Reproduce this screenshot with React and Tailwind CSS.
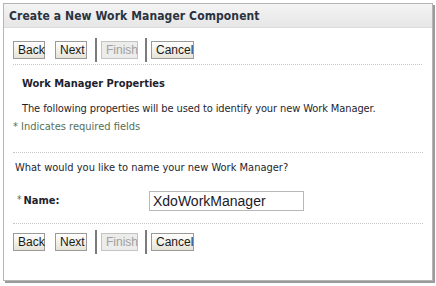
export default function App() {
  const btn = "h-[18px] px-[4px] border border-[#9a9a9a] bg-gradient-to-b from-[#ffffff] to-[#e6e3d6] text-[12px] leading-none text-[#1a1a1a] font-['Liberation_Sans',Arial,sans-serif]";
  const dis = "h-[18px] px-[4px] border border-[#c4c4c4] bg-[#ececea] text-[12px] leading-none text-[#a0a0a0] font-['Liberation_Sans',Arial,sans-serif]";

  const Buttons = () => (
    <div className="flex items-center h-[24px]">
      <button className={btn + " w-[32px]"}>Back</button>
      <button className={btn + " w-[32px] ml-[10px]"}>Next</button>
      <div className="w-[2px] h-[24px] bg-[#7b7b7b] ml-[8px]" />
      <button className={dis + " w-[37px] ml-[4px]"}>Finish</button>
      <div className="w-[2px] h-[24px] bg-[#7b7b7b] ml-[7px]" />
      <button className={btn + " w-[43px] ml-[4px]"}>Cancel</button>
    </div>
  );

  const rule = "border-t border-dotted border-[#c6c6c6]";

  return (
    <div className="w-[436px] h-[286px] bg-white p-[3px] font-['DejaVu_Sans_Condensed','Liberation_Sans',sans-serif] text-[#1f1f2e]">
      <div className="w-[430px] h-[278px] border border-[#b5b5b5] shadow-[2px_2px_0_#9a9a9a] flex flex-col">
        <div className="h-[24px] bg-gradient-to-b from-[#f4f4f4] to-[#e6e6e6] border-b border-[#dcdcdc] flex items-center pl-[5px]">
          <span className="text-[12px] font-bold text-[#2a3240] tracking-[0.1px]">Create a New Work Manager Component</span>
        </div>
        <div className="px-[9px] pt-[10px]">
          <Buttons />
          <div className={"mt-[2px] mr-[1px] " + rule} />
          <div className="pl-[9px] mt-[12px] text-[11px] leading-[14px] font-bold">Work Manager Properties</div>
          <div className="pl-[9px] mt-[11px] text-[11px] leading-[14px] tracking-[-0.1px]">The following properties will be used to identify your new Work Manager.</div>
          <div className="mt-[4px] text-[11px] leading-[14px] text-[#566f57]">* Indicates required fields</div>
          <div className={"mt-[18px] " + rule} />
          <div className="pl-[2px] mt-[8px] text-[11px] leading-[14px]">What would you like to name your new Work Manager?</div>
          <div className="flex items-center mt-[16px] h-[20px]">
            <div className="w-[136px] pl-[4px] flex items-start">
              <span className="text-[10px] leading-[10px] text-[#566f57] mr-[2px]">*</span>
              <span className="text-[11px] leading-[14px] font-bold -mt-[1px]">Name:</span>
            </div>
            <input
              readOnly
              value="XdoWorkManager"
              className="w-[155px] h-[20px] border border-[#b8b8b8] px-[3px] text-[14px] text-[#1a1a2a] font-['Liberation_Sans',Arial,sans-serif] outline-none"
            />
          </div>
          <div className={"mt-[12px] " + rule} />
          <div className="mt-[6px]">
            <Buttons />
          </div>
        </div>
      </div>
    </div>
  );
}
